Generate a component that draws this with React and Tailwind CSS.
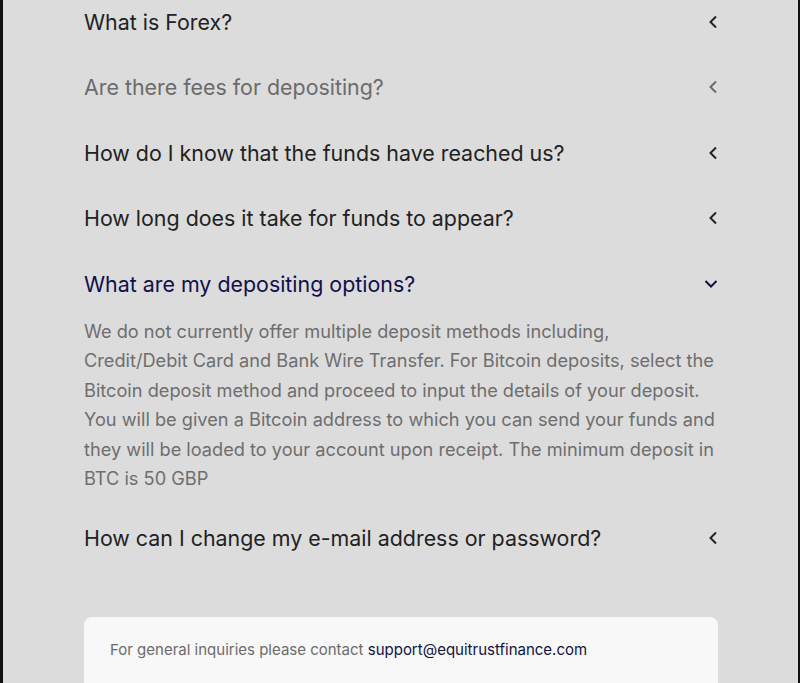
import React, { useState } from 'react';

const faqs = [
  { q: 'What is Forex?' },
  { q: 'Are there fees for depositing?' },
  { q: 'How do I know that the funds have reached us?' },
  { q: 'How long does it take for funds to appear?' },
  {
    q: 'What are my depositing options?',
    a: [
      'We do not currently offer multiple deposit methods including,',
      'Credit/Debit Card and Bank Wire Transfer. For Bitcoin deposits, select the',
      'Bitcoin deposit method and proceed to input the details of your deposit.',
      'You will be given a Bitcoin address to which you can send your funds and',
      'they will be loaded to your account upon receipt. The minimum deposit in',
      'BTC is 50 GBP',
    ],
  },
  { q: 'How can I change my e-mail address or password?' },
];

// Small chevron, points left when closed and down when open
const Chevron = ({ open }) => (
  <svg width="14" height="14" viewBox="0 0 14 14" fill="none" className="shrink-0">
    {open ? (
      <path d="M1.5 4 L7 9.5 L12.5 4" stroke="currentColor" strokeWidth="2" />
    ) : (
      <path d="M12 1.5 L6.5 7 L12 12.5" stroke="currentColor" strokeWidth="2" />
    )}
  </svg>
);

export default function App() {
  const [open, setOpen] = useState(4);
  const hover = 1;

  return (
    <div
      className="min-h-screen bg-[#dcdcdc] border-l-[3px] border-r-[2px] border-[#111] overflow-hidden"
      style={{ fontFamily: 'Inter, "Noto Sans", sans-serif' }}
    >
      <div className="max-w-[634px] ml-[81px] -mt-[11px]">
        {faqs.map((item, i) => {
          const isOpen = open === i;
          const color = isOpen ? 'text-[#10104a]' : i === hover ? 'text-[#6b6b6b]' : 'text-[#222222]';
          return (
            <div key={i}>
              <button
                onClick={() => setOpen(isOpen ? -1 : i)}
                className={`w-full h-[65.5px] flex items-center justify-between text-left text-[21.4px] ${color}`}
              >
                <span>{item.q}</span>
                <Chevron open={isOpen} />
              </button>
              {isOpen && item.a && (
                <p className="text-[18.2px] leading-[29.6px] text-[#6e6e6e] pb-[11px] whitespace-nowrap">
                  {item.a.map((line, j) => (
                    <span key={j} className="block">{line}</span>
                  ))}
                </p>
              )}
            </div>
          );
        })}

        <div className="mt-[46px] bg-[#f8f8f8] rounded-lg px-[26px] pt-[22px] pb-8 text-[15px] text-[#6b6b6b]">
          For general inquiries please contact{' '}
          <a href="#" className="text-[#12123e]">support@equitrustfinance.com</a>
        </div>
      </div>
    </div>
  );
}
